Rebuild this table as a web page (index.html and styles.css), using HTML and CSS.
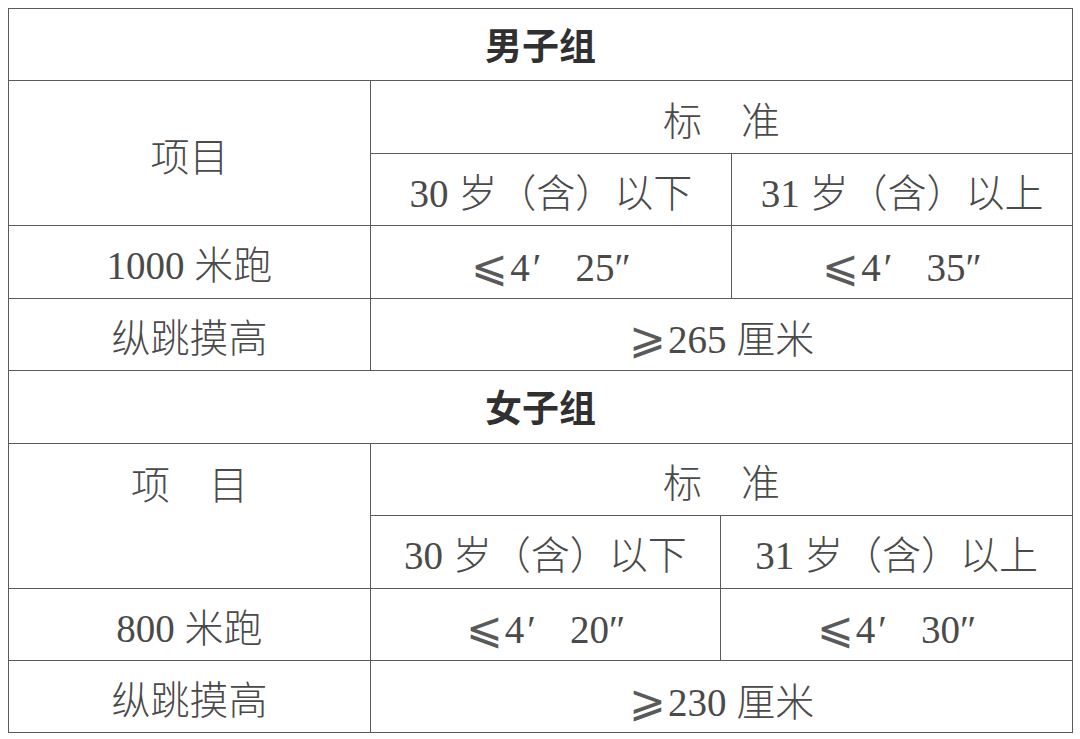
FILE: index.html
```html
<!DOCTYPE html>
<html lang="zh-CN">
<head>
<meta charset="utf-8">
<link rel="stylesheet" href="styles.css">
</head>
<body>
<div class="sheet">
  <table class="grid">
    <colgroup><col class="c1"><col class="m2"><col class="m3"></colgroup>
    <tr><td colspan="3" class="title">男子组</td></tr>
    <tr><td rowspan="2">项目</td><td colspan="2">标　准</td></tr>
    <tr><td>30 岁（含）以下</td><td>31 岁（含）以上</td></tr>
    <tr><td>1000 米跑</td><td><span class="op">⩽</span>4<span class="pr">′</span>25″</td><td><span class="op">⩽</span>4<span class="pr">′</span>35″</td></tr>
    <tr><td>纵跳摸高</td><td colspan="2"><span class="op">⩾</span>265 厘米</td></tr>
  </table>
  <table class="grid second">
    <colgroup><col class="c1"><col class="f2"><col class="f3"></colgroup>
    <tr><td colspan="3" class="title">女子组</td></tr>
    <tr><td rowspan="2" class="top">项　目</td><td colspan="2">标　准</td></tr>
    <tr><td>30 岁（含）以下</td><td>31 岁（含）以上</td></tr>
    <tr><td>800 米跑</td><td><span class="op">⩽</span>4<span class="pr">′</span>20″</td><td><span class="op">⩽</span>4<span class="pr">′</span>30″</td></tr>
    <tr><td>纵跳摸高</td><td colspan="2"><span class="op">⩾</span>230 厘米</td></tr>
  </table>
</div>
</body>
</html>
```
FILE: styles.css
```css
html, body {
  margin: 0;
  padding: 0;
  background: #ffffff;
}
.sheet {
  padding: 8px 0 0 8px;
}
.grid {
  border-collapse: collapse;
  table-layout: fixed;
  width: 1064px;
  font-family: "Liberation Serif", "Noto Sans CJK SC", serif;
  font-size: 39px;
  font-weight: 300;
  color: #4a4a4a;
}
.c1 { width: 362px; }
.m2 { width: 361px; }
.m3 { width: 341px; }
.f2 { width: 350px; }
.f3 { width: 352px; }
.grid tr {
  height: 72.4px;
}
.grid td {
  border: 1.4px solid #5a5a5a;
  text-align: center;
  vertical-align: middle;
  padding: 8px 0 0 0;
  line-height: 1;
  white-space: nowrap;
}
.grid td.title {
  font-family: "Noto Sans CJK SC", sans-serif;
  font-weight: 700;
  color: #303030;
  font-size: 37px;
  padding-top: 0;
}
.second tr:first-child td {
  border-top: 0;
}
.grid td.top {
  vertical-align: top;
  padding-top: 22px;
}
.op {
  font-family: "DejaVu Sans", serif;
  font-size: 44px;
  font-weight: 200;
  color: #5a5a5a;
  margin-right: 2px;
}
.pr {
  padding-left: 3px;
  padding-right: 34px;
}
```
